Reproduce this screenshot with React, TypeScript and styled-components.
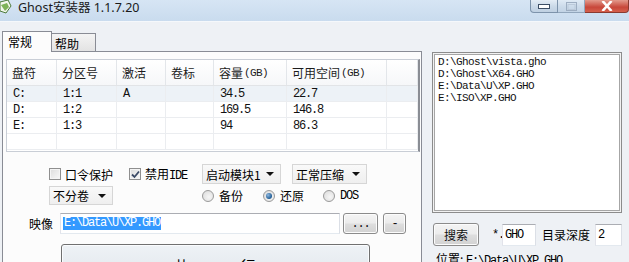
import React from "react";
import styled, { createGlobalStyle } from "styled-components";

const CJK = `"Noto Sans CJK SC", "Noto Sans", sans-serif`;
const MONO = `"Liberation Mono", "DejaVu Sans Mono", monospace`;

const Global = createGlobalStyle`
  html, body { margin: 0; padding: 0; background: #eef1f5; }
  body { width: 629px; height: 262px; overflow: hidden; }
`;

const Window = styled.div`
  width: 629px;
  height: 262px;
  overflow: hidden;
  display: flex;
  flex-direction: column;
  background: #eef1f5;
  font-family: ${CJK};
  font-size: 12px;
  color: #000;
`;

const TitleBar = styled.div`
  height: 22px;
  flex: none;
  box-sizing: border-box;
  display: flex;
  align-items: flex-start;
  background: linear-gradient(#d6e5f4, #c9dbee);
  border-bottom: 1px solid #f5f8fb;
`;

const AppIcon = styled.div`
  width: 12px;
  height: 15px;
  flex: none;
  display: flex;
`;

const Title = styled.div`
  margin-left: 6px;
  font-family: "Noto Sans", ${CJK};
  font-size: 12.5px;
  line-height: 15px;
  color: #1a1a1a;
  white-space: nowrap;
`;

const Captions = styled.div`
  margin-left: auto;
  display: flex;
`;

const CapBtn = styled.div<{ $w: number; $kind: "min" | "max" | "close" }>`
  width: ${(p) => p.$w}px;
  height: 13px;
  box-sizing: border-box;
  display: flex;
  align-items: center;
  justify-content: center;
  border: 1px solid ${(p) => (p.$kind === "close" ? "#8a3a30" : "#7d93ab")};
  border-top: none;
  border-left: ${(p) => (p.$kind === "min" ? "1px solid #7d93ab" : "none")};
  border-radius: ${(p) => (p.$kind === "min" ? "0 0 0 4px" : p.$kind === "close" ? "0 0 4px 0" : "0")};
  background: ${(p) =>
    p.$kind === "close"
      ? "linear-gradient(#e39a8c, #c8473a 60%, #d5604c)"
      : "linear-gradient(#e4edf6, #cad9e8 55%, #bfd0e2)"};
  opacity: ${(p) => (p.$kind === "max" ? 0.75 : 1)};
`;

const Body = styled.div`
  flex: 1;
  min-height: 0;
  display: flex;
`;

const LeftCol = styled.div`
  width: 425px;
  flex: none;
  display: flex;
  flex-direction: column;
`;

const TabStrip = styled.div`
  height: 29px;
  flex: none;
  box-sizing: border-box;
  display: flex;
  align-items: flex-end;
  padding-left: 2px;
`;

const Tab = styled.div<{ $active?: boolean }>`
  box-sizing: border-box;
  position: relative;
  z-index: 1;
  font-size: 12px;
  line-height: 16px;
  display: flex;
  align-items: flex-start;
  ${(p) =>
    p.$active
      ? `
    width: 50px; height: 21px; margin-bottom: -1px;
    border: 1px solid #898c95; border-bottom: none;
    background: #fcfcfc; padding: 2px 0 0 5px;
  `
      : `
    width: 44px; height: 18px;
    border: 1px solid #898c95; border-left: none; border-bottom: none;
    background: linear-gradient(#f4f4f4, #e3e3e3);
    padding: 2px 0 0 3px;
  `}
`;

const TabPanel = styled.div`
  margin-left: 2px;
  width: 420px;
  flex: 1;
  box-sizing: border-box;
  border: 1px solid #898c95;
  border-bottom: none;
  background: #fcfcfc;
  display: flex;
  flex-direction: column;
`;

const ListView = styled.div`
  margin: 7px 0 0 3px;
  width: 414px;
  height: 93px;
  flex: none;
  box-sizing: border-box;
  border: 1px solid #c9ced6;
  border-right: 2px solid #8a8d94;
  background: #fff;
  overflow: hidden;
`;

const COLS = "50px 60px 49px 48px 73px 100px 1fr";

const HeaderRow = styled.div`
  display: grid;
  grid-template-columns: ${COLS};
  height: 26px;
  box-sizing: border-box;
  background: linear-gradient(#ffffff, #f6f7f9);
  border-bottom: 1px solid #e2e4e7;
`;

const HeaderCell = styled.div`
  display: flex;
  align-items: center;
  padding-left: 5px;
  border-right: 1px solid #e3e6ea;
  font-size: 12px;
  color: #1c1c1c;
  white-space: nowrap;
`;

const Unit = styled.span`
  font-family: ${MONO};
  font-size: 11px;
  letter-spacing: -0.6px;
  margin-left: 1px;
`;

const Row = styled.div<{ $hl?: boolean }>`
  display: grid;
  grid-template-columns: ${COLS};
  height: 16px;
  box-sizing: border-box;
  border-bottom: 1px solid #ebedf0;
  background: ${(p) => (p.$hl ? "#edf2f7" : "#fff")};
`;

const Cell = styled.div`
  display: flex;
  align-items: center;
  padding-left: 6px;
  border-right: 1px solid #ebedf0;
  font-family: ${MONO};
  font-size: 12px;
  letter-spacing: -1.2px;
  color: #111;
  white-space: nowrap;
`;

const Controls = styled.div`
  display: flex;
  flex-direction: column;
`;

const CtlRow = styled.div<{ $top: number; $left: number; $h: number }>`
  display: flex;
  align-items: center;
  margin-top: ${(p) => p.$top}px;
  padding-left: ${(p) => p.$left}px;
  height: ${(p) => p.$h}px;
  flex: none;
`;

const CheckItem = styled.div<{ $w: number }>`
  width: ${(p) => p.$w}px;
  display: flex;
  align-items: center;
  gap: 4px;
  font-size: 12px;
  white-space: nowrap;
`;

const Box = styled.div`
  width: 12px;
  height: 12px;
  box-sizing: border-box;
  border: 1px solid #8f8f8f;
  background: linear-gradient(135deg, #dcdcdc, #f8f8f8);
  box-shadow: inset 0 0 0 1px #f4f4f4;
  display: flex;
  align-items: center;
  justify-content: center;
`;

const MonoText = styled.span`
  font-family: ${MONO};
  font-size: 12px;
  letter-spacing: -1.2px;
`;

const Select = styled.div<{ $w: number; $h: number }>`
  width: ${(p) => p.$w}px;
  height: ${(p) => p.$h}px;
  box-sizing: border-box;
  border: 1px solid #d6d6d6;
  background: linear-gradient(#f9f9f9, #efefef);
  display: flex;
  align-items: center;
  padding-left: 3px;
  font-size: 12px;
  white-space: nowrap;
`;

const Arrow = styled.div`
  margin-left: auto;
  margin-right: 6px;
  flex: none;
  width: 0;
  height: 0;
  border-left: 4px solid transparent;
  border-right: 4px solid transparent;
  border-top: 4px solid #111;
`;

const RadioItem = styled.div<{ $w: number; $ml?: number }>`
  width: ${(p) => p.$w}px;
  margin-left: ${(p) => p.$ml ?? 0}px;
  display: flex;
  align-items: center;
  gap: 5px;
  font-size: 12px;
  white-space: nowrap;
`;

const Radio = styled.div<{ $on?: boolean }>`
  width: 12px;
  height: 12px;
  box-sizing: border-box;
  border-radius: 50%;
  border: 1px solid #9a9a9a;
  background: radial-gradient(circle at 60% 60%, #f6f6f6, #d9d9d9);
  display: flex;
  align-items: center;
  justify-content: center;
  &::after {
    content: "";
    display: ${(p) => (p.$on ? "block" : "none")};
    width: 6px;
    height: 6px;
    border-radius: 50%;
    background: radial-gradient(circle at 35% 35%, #8fb8e0, #1f5c94 70%);
  }
`;

const FieldLabel = styled.div<{ $w: number }>`
  width: ${(p) => p.$w}px;
  font-size: 12px;
  white-space: nowrap;
  flex: none;
`;

const Input = styled.div<{ $w: number; $h: number; $ml?: number }>`
  width: ${(p) => p.$w}px;
  height: ${(p) => p.$h}px;
  margin-left: ${(p) => p.$ml ?? 0}px;
  flex: none;
  box-sizing: border-box;
  border: 1px solid #abadb3;
  border-right-color: #dbdfe6;
  border-bottom-color: #e3e9ef;
  border-left-color: #e2e3ea;
  background: #fff;
  display: flex;
  align-items: center;
  padding-left: 2px;
  font-family: ${MONO};
  font-size: 12px;
  letter-spacing: -1.2px;
  white-space: nowrap;
`;

const Selected = styled.span`
  background: #3399ff;
  color: #fff;
  line-height: 13px;
  padding: 0 1px;
`;

const Button = styled.div<{ $w: number; $h: number; $ml?: number }>`
  width: ${(p) => p.$w}px;
  height: ${(p) => p.$h}px;
  margin-left: ${(p) => p.$ml ?? 0}px;
  flex: none;
  box-sizing: border-box;
  border: 1px solid #8b8b8b;
  border-radius: 3px;
  background: linear-gradient(#f4f4f4 0%, #ececec 48%, #dedede 52%, #d2d2d2 100%);
  box-shadow: inset 0 0 0 1px #fcfcfc;
  display: flex;
  align-items: center;
  justify-content: center;
  font-size: 12px;
  color: #111;
`;

const BigButton = styled.div`
  margin: 10px 0 0 58px;
  width: 309px;
  height: 30px;
  flex: none;
  box-sizing: border-box;
  border: 1px solid #707070;
  border-radius: 3px;
  background: linear-gradient(#eef2f6, #e4e9ee);
  box-shadow: inset 0 0 0 1px #fafcfe;
  display: flex;
  justify-content: center;
  padding-top: 11px;
  font-size: 15px;
  line-height: 20px;
  letter-spacing: 50px;
  text-indent: 50px;
`;

const RightCol = styled.div`
  flex: 1;
  display: flex;
  flex-direction: column;
  padding: 30px 0 0 7px;
`;

const ListBox = styled.div`
  width: 190px;
  height: 161px;
  flex: none;
  box-sizing: border-box;
  border: 1px solid #8c8c8c;
  box-shadow: inset 0 0 0 1px #f2f2f2, inset 0 0 0 2px #a6a6a6;
  background: #fff;
  padding: 3px 0 0 5px;
  font-family: ${MONO};
  font-size: 11px;
  letter-spacing: -0.6px;
  line-height: 12px;
  color: #111;
`;

const SearchRow = styled.div`
  margin-top: 10px;
  height: 23px;
  flex: none;
  display: flex;
  align-items: center;
`;

const Star = styled.div`
  margin-left: 13px;
  width: 10px;
  font-family: ${MONO};
  font-size: 12px;
  letter-spacing: -1.2px;
`;

const PathLine = styled.div`
  margin-top: 4px;
  padding-left: 4px;
  font-size: 12px;
  white-space: nowrap;
`;

const CheckMark = () => (
  <svg width="9" height="9" viewBox="0 0 9 9">
    <path d="M1 4.5 L3.5 7 L8 1.5" fill="none" stroke="#3b4a66" strokeWidth="1.8" />
  </svg>
);

const data = [
  { d: "C:", p: "1:1", a: "A", l: "", c: "34.5", f: "22.7" },
  { d: "D:", p: "1:2", a: "", l: "", c: "169.5", f: "146.8" },
  { d: "E:", p: "1:3", a: "", l: "", c: "94", f: "86.3" },
  { d: "", p: "", a: "", l: "", c: "", f: "" },
];

const files = [
  "D:\\Ghost\\vista.gho",
  "D:\\Ghost\\X64.GHO",
  "E:\\Data\\U\\XP.GHO",
  "E:\\ISO\\XP.GHO",
];

export default function App() {
  return (
    <Window>
      <Global />
      <TitleBar>
        <AppIcon>
          <svg width="12" height="15" viewBox="0 0 12 15">
            <path d="M0 2 L8 0 L11 6 L6 13 L0 11 Z" fill="#f4f7ee" stroke="#4c7a3a" strokeWidth="1" />
            <path d="M1 5 L7 3 L9 7 L5 11 Z" fill="#7fb35a" />
          </svg>
        </AppIcon>
        <Title>Ghost安装器 1.1.7.20</Title>
        <Captions>
          <CapBtn $w={28} $kind="min">
            <svg width="12" height="5" viewBox="0 0 12 5">
              <rect x="0.5" y="0.5" width="11" height="4" fill="#fff" stroke="#3d4f66" />
            </svg>
          </CapBtn>
          <CapBtn $w={27} $kind="max">
            <svg width="11" height="9" viewBox="0 0 11 9">
              <rect x="0.5" y="0.5" width="10" height="8" fill="none" stroke="#8c9db2" strokeWidth="1" />
              <rect x="2" y="2.5" width="7" height="5" fill="none" stroke="#b4c2d2" strokeWidth="1" />
            </svg>
          </CapBtn>
          <CapBtn $w={44} $kind="close">
            <svg width="12" height="10" viewBox="0 0 12 10">
              <path d="M1.5 0 L10.5 10 M10.5 0 L1.5 10" stroke="#fff" strokeWidth="2.6" />
            </svg>
          </CapBtn>
        </Captions>
      </TitleBar>
      <Body>
        <LeftCol>
          <TabStrip>
            <Tab $active>常规</Tab>
            <Tab>帮助</Tab>
          </TabStrip>
          <TabPanel>
            <ListView>
              <HeaderRow>
                <HeaderCell>盘符</HeaderCell>
                <HeaderCell>分区号</HeaderCell>
                <HeaderCell>激活</HeaderCell>
                <HeaderCell>卷标</HeaderCell>
                <HeaderCell>
                  容量<Unit>(GB)</Unit>
                </HeaderCell>
                <HeaderCell>
                  可用空间<Unit>(GB)</Unit>
                </HeaderCell>
                <HeaderCell />
              </HeaderRow>
              {data.map((r, i) => (
                <Row key={i} $hl={i === 0}>
                  <Cell>{r.d}</Cell>
                  <Cell>{r.p}</Cell>
                  <Cell>{r.a}</Cell>
                  <Cell>{r.l}</Cell>
                  <Cell>{r.c}</Cell>
                  <Cell>{r.f}</Cell>
                  <Cell />
                </Row>
              ))}
            </ListView>
            <Controls>
              <CtlRow $top={12} $left={46} $h={20}>
                <CheckItem $w={80}>
                  <Box />
                  口令保护
                </CheckItem>
                <CheckItem $w={73}>
                  <Box>
                    <CheckMark />
                  </Box>
                  <span>
                    禁用<MonoText>IDE</MonoText>
                  </span>
                </CheckItem>
                <Select $w={79} $h={20}>
                  启动模块1
                  <Arrow />
                </Select>
                <Select $w={75} $h={20} style={{ marginLeft: 11 }}>
                  正常压缩
                  <Arrow />
                </Select>
              </CtlRow>
              <CtlRow $top={2} $left={46} $h={19}>
                <Select $w={64} $h={19}>
                  不分卷
                  <Arrow />
                </Select>
                <RadioItem $w={61} $ml={89}>
                  <Radio />
                  备份
                </RadioItem>
                <RadioItem $w={60}>
                  <Radio $on />
                  还原
                </RadioItem>
                <RadioItem $w={50}>
                  <Radio />
                  <MonoText>DOS</MonoText>
                </RadioItem>
              </CtlRow>
              <CtlRow $top={8} $left={26} $h={21}>
                <FieldLabel $w={31}>映像</FieldLabel>
                <Input $w={280} $h={21}>
                  <Selected>E:\Data\U\XP.GHO</Selected>
                </Input>
                <Button $w={35} $h={21} $ml={3}>
                  <MonoText>...</MonoText>
                </Button>
                <Button $w={23} $h={21} $ml={5}>
                  <MonoText>-</MonoText>
                </Button>
              </CtlRow>
              <BigButton>执行</BigButton>
            </Controls>
          </TabPanel>
        </LeftCol>
        <RightCol>
          <ListBox>
            {files.map((f) => (
              <div key={f}>{f}</div>
            ))}
          </ListBox>
          <SearchRow>
            <Button $w={46} $h={23} $ml={1}>
              搜索
            </Button>
            <Star>*.</Star>
            <Input $w={34} $h={22}>
              GHO
            </Input>
            <FieldLabel $w={48} style={{ marginLeft: 6 }}>
              目录深度
            </FieldLabel>
            <Input $w={27} $h={22} $ml={5}>
              2
            </Input>
          </SearchRow>
          <PathLine>
            位置: <MonoText>E:\Data\U\XP.GHO</MonoText>
          </PathLine>
        </RightCol>
      </Body>
    </Window>
  );
}
